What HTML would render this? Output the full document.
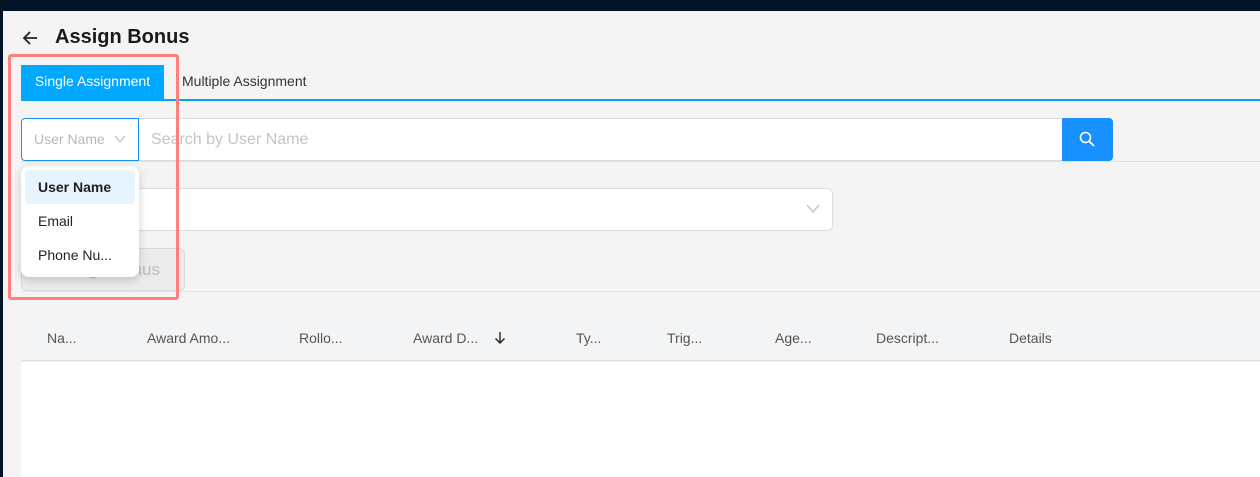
<!DOCTYPE html>
<html><head><style>
*{box-sizing:border-box;margin:0;padding:0}
body{width:1260px;height:477px;overflow:hidden;background:#031428;font-family:"Liberation Sans",Roboto,sans-serif;position:relative}
.main{position:absolute;left:3px;top:11px;right:0;bottom:0;background:#f4f4f4}
.a{position:absolute}
</style></head><body>
<div class="main"></div>
<svg class="a" style="left:21px;top:29px" width="18" height="18" viewBox="0 0 18 18"><path d="M16 9H3M9 3L3 9l6 6" fill="none" stroke="#222" stroke-width="1.8"/></svg>
<div class="a" style="left:55px;top:26px;font-size:20px;font-weight:bold;color:#1a1a1a">Assign Bonus</div>
<div class="a" style="left:21px;top:65px;width:143px;height:34px;background:#00a8ff;color:#fff;font-size:14px;line-height:33px;text-align:center">Single Assignment</div>
<div class="a" style="left:182px;top:65px;height:34px;color:#333;font-size:14px;line-height:33px">Multiple Assignment</div>
<div class="a" style="left:21px;top:99px;right:0;height:2px;background:#0aa4f6"></div>
<div class="a" style="left:21px;top:118px;width:1092px;height:43px;background:#fff;border:1px solid #dcdcdc;border-radius:4px"></div>
<div class="a" style="left:21px;top:118px;width:118px;height:43px;border:1px solid #1890ff;border-radius:4px 0 0 4px;background:#fff;color:#b8b8b8;font-size:14px;line-height:41px;padding-left:12px">User Name</div>
<svg class="a" style="left:114px;top:134px" width="12" height="10"><path d="M1 2l5 6 5-6" fill="none" stroke="#bbb" stroke-width="1.2"/></svg>
<div class="a" style="left:151px;top:118px;color:#c4c4c4;font-size:16px;line-height:43px">Search by User Name</div>
<div class="a" style="left:1062px;top:118px;width:51px;height:43px;background:#1890ff;border-radius:0 4px 4px 0"></div>
<svg class="a" style="left:1078px;top:130px" width="18" height="18"><circle cx="7.5" cy="7.5" r="5" fill="none" stroke="#fff" stroke-width="1.6"/><path d="M11 11l5 5" stroke="#fff" stroke-width="1.8"/></svg>
<div class="a" style="left:21px;top:161px;right:0;height:1px;background:#e2e2e2"></div>
<div class="a" style="left:21px;top:188px;width:812px;height:43px;background:#fff;border:1px solid #dcdcdc;border-radius:6px"></div>
<svg class="a" style="left:806px;top:204px" width="14" height="10"><path d="M1 1l6 7 6-7" fill="none" stroke="#bbb" stroke-width="1.2"/></svg>
<div class="a" style="left:21px;top:248px;width:164px;height:43px;background:#ebebeb;border:1px solid #d9d9d9;border-radius:6px;color:#bdbdbd;font-size:17px;line-height:41px;text-align:center;padding-left:10px">Assign Bonus</div>
<div class="a" style="left:21px;top:291px;right:0;height:1px;background:#e2e2e2"></div>
<div class="a" style="left:21px;top:315px;right:0;height:46px;background:#f3f4f6;border-bottom:1px solid #e0e0e0;font-size:14px;color:#555;line-height:46px">
<span class="a" style="left:26px">Na...</span><span class="a" style="left:126px">Award Amo...</span><span class="a" style="left:278px">Rollo...</span><span class="a" style="left:392px">Award D...</span><span class="a" style="left:555px">Ty...</span><span class="a" style="left:646px">Trig...</span><span class="a" style="left:754px">Age...</span><span class="a" style="left:855px">Descript...</span><span class="a" style="left:988px">Details</span>
<svg class="a" style="left:473px;top:16px" width="12" height="14"><path d="M6 1v11M1.5 7.5L6 12l4.5-4.5" fill="none" stroke="#222" stroke-width="1.4"/></svg></div>
<div class="a" style="left:21px;top:362px;right:0;bottom:0;background:#fff"></div>
<div class="a" style="left:21px;top:166px;width:118px;height:111px;background:#fff;border-radius:8px;box-shadow:0 3px 10px rgba(0,0,0,.18);padding:4px;font-size:14px;color:#222">
<div style="height:34px;background:#e6f4ff;border-radius:4px;font-weight:bold;line-height:34px;padding-left:13px">User Name</div>
<div style="height:34px;line-height:34px;padding-left:13px">Email</div>
<div style="height:34px;line-height:34px;padding-left:13px">Phone Nu...</div></div>
<div class="a" style="left:8px;top:54px;width:171px;height:246px;border:3.5px solid #ff7f7f;border-radius:3px"></div>
</body></html>
